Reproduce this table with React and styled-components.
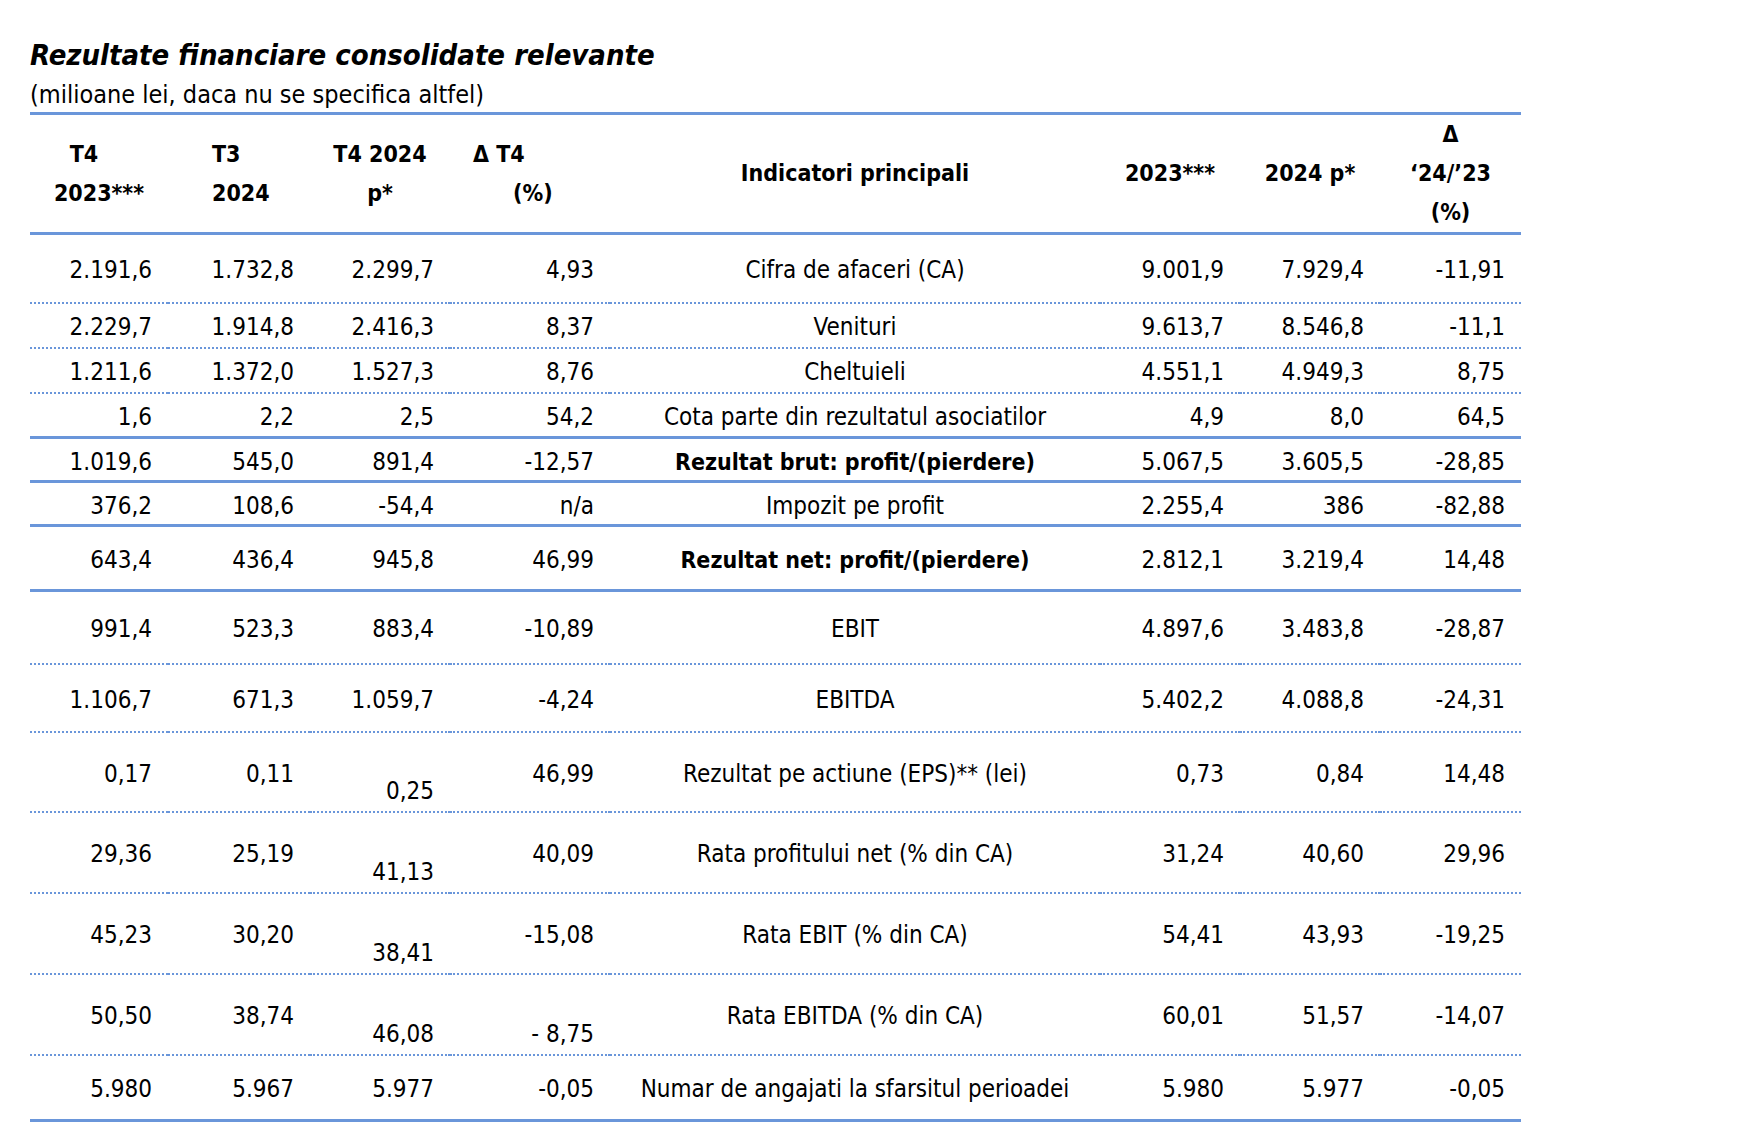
import React from 'react';
import styled, { createGlobalStyle } from 'styled-components';

const GlobalStyle = createGlobalStyle`
  body {
    margin: 0;
    background: #ffffff;
    font-family: "DejaVu Sans Condensed", "DejaVu Sans", sans-serif;
    font-stretch: condensed;
    color: #000;
  }
`;

const LINE = '#6a96da';

const Page = styled.div`
  padding: 38px 0 0 30px;
  width: 1491px;
`;

const Title = styled.h1`
  margin: 0;
  font-size: 29px;
  line-height: 34px;
  font-weight: bold;
  font-style: italic;
`;

const Subtitle = styled.div`
  font-size: 25px;
  line-height: 30px;
  margin-top: 8px;
  margin-bottom: 2px;
`;

const Table = styled.table`
  width: 100%;
  border-collapse: collapse;
  table-layout: fixed;
  border-top: 3px solid ${LINE};
  font-size: 24px;
`;

const HeadCell = styled.th`
  border-bottom: 3px solid ${LINE};
  height: 117px;
  padding: 0;
  font-size: 23px;
  font-weight: bold;
  vertical-align: middle;
  text-align: ${p => p.align || 'center'};
  line-height: 39px;
`;

const HeadLine = styled.div`
  padding-left: ${p => p.pl || 0}px;
  padding-right: ${p => p.pr || 0}px;
`;

const Row = styled.tr`
  height: ${p => p.h}px;
  border-bottom: ${p => (p.solid ? `3px solid ${LINE}` : `2px dotted ${LINE}`)};
`;

const Cell = styled.td`
  padding: ${p => (p.low ? '0 16px 7px 0' : '4px 16px 0 0')};
  text-align: right;
  vertical-align: ${p => (p.low ? 'bottom' : 'middle')};
  line-height: 26px;
  white-space: nowrap;
`;

const Label = styled.td`
  padding: 4px 0 0;
  text-align: center;
  vertical-align: middle;
  line-height: 26px;
  white-space: nowrap;
  font-weight: ${p => (p.bold ? 'bold' : 'normal')};
  font-size: ${p => (p.bold ? '23px' : '24px')};
`;

const rows = [
  { h: 69, v: ['2.191,6', '1.732,8', '2.299,7', '4,93'], label: 'Cifra de afaceri (CA)', y: ['9.001,9', '7.929,4', '-11,91'] },
  { h: 45, v: ['2.229,7', '1.914,8', '2.416,3', '8,37'], label: 'Venituri', y: ['9.613,7', '8.546,8', '-11,1'] },
  { h: 45, v: ['1.211,6', '1.372,0', '1.527,3', '8,76'], label: 'Cheltuieli', y: ['4.551,1', '4.949,3', '8,75'] },
  { h: 45, solid: true, v: ['1,6', '2,2', '2,5', '54,2'], label: 'Cota parte din rezultatul asociatilor', y: ['4,9', '8,0', '64,5'] },
  { h: 44, solid: true, bold: true, v: ['1.019,6', '545,0', '891,4', '-12,57'], label: 'Rezultat brut: profit/(pierdere)', y: ['5.067,5', '3.605,5', '-28,85'] },
  { h: 44, solid: true, v: ['376,2', '108,6', '-54,4', 'n/a'], label: 'Impozit pe profit', y: ['2.255,4', '386', '-82,88'] },
  { h: 65, solid: true, bold: true, v: ['643,4', '436,4', '945,8', '46,99'], label: 'Rezultat net: profit/(pierdere)', y: ['2.812,1', '3.219,4', '14,48'] },
  { h: 73, v: ['991,4', '523,3', '883,4', '-10,89'], label: 'EBIT', y: ['4.897,6', '3.483,8', '-28,87'] },
  { h: 68, v: ['1.106,7', '671,3', '1.059,7', '-4,24'], label: 'EBITDA', y: ['5.402,2', '4.088,8', '-24,31'] },
  { h: 80, low: [2], v: ['0,17', '0,11', '0,25', '46,99'], label: 'Rezultat pe actiune (EPS)** (lei)', y: ['0,73', '0,84', '14,48'] },
  { h: 81, low: [2], v: ['29,36', '25,19', '41,13', '40,09'], label: 'Rata profitului net (% din CA)', y: ['31,24', '40,60', '29,96'] },
  { h: 81, low: [2], v: ['45,23', '30,20', '38,41', '-15,08'], label: 'Rata EBIT (% din CA)', y: ['54,41', '43,93', '-19,25'] },
  { h: 81, low: [2, 3], v: ['50,50', '38,74', '46,08', '- 8,75'], label: 'Rata EBITDA (% din CA)', y: ['60,01', '51,57', '-14,07'] },
  { h: 66, solid: true, v: ['5.980', '5.967', '5.977', '-0,05'], label: 'Numar de angajati la sfarsitul perioadei', y: ['5.980', '5.977', '-0,05'] },
];

export default function App() {
  return (
    <Page>
      <GlobalStyle />
      <Title>Rezultate financiare consolidate relevante</Title>
      <Subtitle>(milioane lei, daca nu se specifica altfel)</Subtitle>
      <Table>
        <colgroup>
          <col style={{ width: 138 }} />
          <col style={{ width: 142 }} />
          <col style={{ width: 140 }} />
          <col style={{ width: 160 }} />
          <col style={{ width: 490 }} />
          <col style={{ width: 140 }} />
          <col style={{ width: 140 }} />
          <col style={{ width: 141 }} />
        </colgroup>
        <thead>
          <tr>
            <HeadCell>
              <HeadLine pr={30}>T4</HeadLine>
              <HeadLine>2023***</HeadLine>
            </HeadCell>
            <HeadCell align="left">
              <HeadLine pl={44}>T3</HeadLine>
              <HeadLine pl={44}>2024</HeadLine>
            </HeadCell>
            <HeadCell>
              <HeadLine>T4 2024</HeadLine>
              <HeadLine>p*</HeadLine>
            </HeadCell>
            <HeadCell align="left">
              <HeadLine pl={23}>Δ T4</HeadLine>
              <HeadLine pl={63}>(%)</HeadLine>
            </HeadCell>
            <HeadCell>Indicatori principali</HeadCell>
            <HeadCell>2023***</HeadCell>
            <HeadCell>2024 p*</HeadCell>
            <HeadCell>
              <HeadLine>Δ</HeadLine>
              <HeadLine>‘24/’23</HeadLine>
              <HeadLine>(%)</HeadLine>
            </HeadCell>
          </tr>
        </thead>
        <tbody>
          {rows.map((r, i) => (
            <Row key={i} h={r.h} solid={r.solid}>
              {r.v.map((v, j) => (
                <Cell key={j} low={r.low && r.low.includes(j)}>{v}</Cell>
              ))}
              <Label bold={r.bold}>{r.label}</Label>
              {r.y.map((v, j) => (
                <Cell key={j}>{v}</Cell>
              ))}
            </Row>
          ))}
        </tbody>
      </Table>
    </Page>
  );
}
